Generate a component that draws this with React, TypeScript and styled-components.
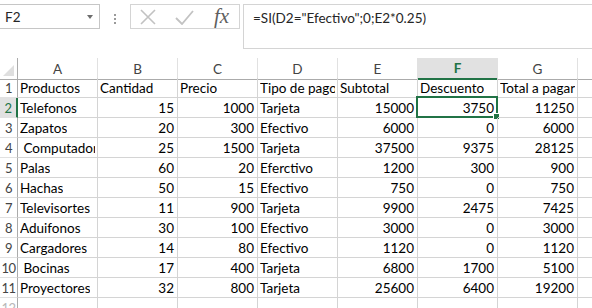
import React from 'react'
import styled, { createGlobalStyle } from 'styled-components'

const GlobalStyle = createGlobalStyle`
  html, body {
    margin: 0;
    padding: 0;
    background: #ffffff;
    overflow: hidden;
  }
  body {
    font-family: 'Lato', 'Liberation Sans', sans-serif;
  }
`

const Page = styled.div`
  width: 592px;
  height: 308px;
  overflow: hidden;
  background: #ffffff;
`

const FormulaBar = styled.div`
  display: flex;
  align-items: flex-start;
  height: 58px;
`

const NameBox = styled.div`
  margin: 4px 0 0 -1px;
  width: 101px;
  height: 25px;
  box-sizing: border-box;
  border: 1px solid #c6c6c6;
  display: flex;
  align-items: center;
  justify-content: space-between;
  padding: 0 6px 0 5px;
  font-size: 13.5px;
  color: #262626;
`

const DropArrow = styled.span`
  width: 0;
  height: 0;
  border-left: 3px solid transparent;
  border-right: 3px solid transparent;
  border-top: 4px solid #6d6d6d;
`

const Grip = styled.div`
  width: 30px;
  height: 29px;
  display: flex;
  flex-direction: column;
  align-items: center;
  justify-content: center;
  gap: 2px;
  margin-top: 4px;

  span {
    width: 2px;
    height: 2px;
    background: #9a9a9a;
  }
`

const ButtonBox = styled.div`
  margin-top: 4px;
  width: 110px;
  height: 25px;
  box-sizing: border-box;
  border: 1px solid #d4d4d4;
  display: flex;
  align-items: center;
  padding: 0 8px;
  gap: 18px;
`

const Fx = styled.span`
  font-family: 'Liberation Serif', serif;
  font-style: italic;
  font-size: 21px;
  color: #5f5f5f;
  line-height: 1;
  margin-left: 2px;
`

const FormulaInput = styled.div`
  margin: 4px 0 0 3px;
  flex: 1;
  height: 45px;
  box-sizing: border-box;
  border: 1px solid #d4d4d4;
  border-right: none;
  padding: 5px 0 0 9px;
  font-size: 13.5px;
  color: #262626;
`

const Sheet = styled.div`
  display: grid;
  grid-template-columns: 18px repeat(8, 80px);
  grid-auto-rows: 20px;
  width: 658px;
  font-size: 13.5px;
  color: #000000;
`

const Corner = styled.div`
  height: 22px;
  border-bottom: 1px solid #ababab;
  border-right: 1px solid #ababab;
  box-sizing: border-box;
  position: relative;

  &::after {
    content: '';
    position: absolute;
    right: 3px;
    bottom: 3px;
    width: 0;
    height: 0;
    border-left: 11px solid transparent;
    border-bottom: 11px solid #dfdfdf;
  }
`

const ColHead = styled.div<{ $active?: boolean }>`
  height: 22px;
  box-sizing: border-box;
  display: flex;
  align-items: center;
  justify-content: center;
  font-size: 13.5px;
  color: ${(p) => (p.$active ? '#217346' : '#444444')};
  font-weight: ${(p) => (p.$active ? 700 : 400)};
  background: ${(p) => (p.$active ? '#e1e1e1' : '#ffffff')};
  border-bottom: ${(p) => (p.$active ? '2px solid #217346' : '1px solid #ababab')};
  border-right: 1px solid #e1e1e1;
`

const RowHead = styled.div<{ $active?: boolean; $faded?: boolean }>`
  box-sizing: border-box;
  display: flex;
  align-items: center;
  justify-content: center;
  padding-top: 1px;
  font-size: 13px;
  color: ${(p) => (p.$active ? '#217346' : p.$faded ? '#b8b8b8' : '#444444')};
  background: ${(p) => (p.$active ? '#e1e1e1' : '#ffffff')};
  border-right: ${(p) => (p.$active ? '2px solid #217346' : '1px solid #ababab')};
  border-bottom: 1px solid #e1e1e1;
  letter-spacing: -0.5px;
  overflow: hidden;
`

const Cell = styled.div<{ $num?: boolean }>`
  position: relative;
  box-sizing: border-box;
  border-right: 1px solid #d4d4d4;
  border-bottom: 1px solid #d4d4d4;
  padding: 1px ${(p) => (p.$num ? '3px' : '2px')} 0;
  display: flex;
  align-items: center;
  justify-content: ${(p) => (p.$num ? 'flex-end' : 'flex-start')};
  white-space: pre;
  overflow: visible;
`

const Clip = styled.span`
  display: block;
  overflow: hidden;
  white-space: pre;
`

const Selection = styled.div`
  position: absolute;
  left: -2px;
  top: -2px;
  right: -1px;
  bottom: -1px;
  border: 2px solid #217346;
  pointer-events: none;

  &::after {
    content: '';
    position: absolute;
    right: -4px;
    bottom: -4px;
    width: 5px;
    height: 5px;
    background: #217346;
    border: 1px solid #ffffff;
  }
`

const QuickAnalysis = styled.div`
  position: absolute;
  left: 3px;
  bottom: -6px;
  width: 12px;
  height: 12px;
  box-sizing: border-box;
  border: 1px solid #9fb8d8;
  background: #f3f7fc;

  &::after {
    content: '';
    position: absolute;
    left: 2px;
    top: 3px;
    width: 6px;
    height: 5px;
    background: #3d7cc9;
  }
`

type Row = [string, number, number, string, number, number, number]

const rows: Row[] = [
  ['Telefonos', 15, 1000, 'Tarjeta', 15000, 3750, 11250],
  ['Zapatos', 20, 300, 'Efectivo', 6000, 0, 6000],
  [' Computadora', 25, 1500, 'Tarjeta', 37500, 9375, 28125],
  ['Palas', 60, 20, 'Eferctivo', 1200, 300, 900],
  ['Hachas', 50, 15, 'Efectivo', 750, 0, 750],
  ['Televisortes', 11, 900, 'Tarjeta', 9900, 2475, 7425],
  ['Aduifonos', 30, 100, 'Efectivo', 3000, 0, 3000],
  ['Cargadores', 14, 80, 'Efectivo', 1120, 0, 1120],
  [' Bocinas', 17, 400, 'Tarjeta', 6800, 1700, 5100],
  ['Proyectores', 32, 800, 'Tarjeta', 25600, 6400, 19200],
]

const headers = ['Productos', 'Cantidad', 'Precio', 'Tipo de pago', 'Subtotal', 'Descuento', 'Total a pagar']
const letters = ['A', 'B', 'C', 'D', 'E', 'F', 'G', 'H']

const CancelIcon = () => (
  <svg width="18" height="16" viewBox="0 0 18 16">
    <path d="M2 1 L16 15 M16 1 L2 15" stroke="#c2c2c2" strokeWidth="1.6" fill="none" />
  </svg>
)

const EnterIcon = () => (
  <svg width="19" height="16" viewBox="0 0 19 16">
    <path d="M1 9 L7 15 L18 2" stroke="#c2c2c2" strokeWidth="1.8" fill="none" />
  </svg>
)

const App = () => {
  return (
    <Page>
      <GlobalStyle />
      <FormulaBar>
        <NameBox>
          F2
          <DropArrow />
        </NameBox>
        <Grip>
          <span />
          <span />
          <span />
        </Grip>
        <ButtonBox>
          <CancelIcon />
          <EnterIcon />
          <Fx>fx</Fx>
        </ButtonBox>
        <FormulaInput>=SI(D2="Efectivo";0;E2*0.25)</FormulaInput>
      </FormulaBar>
      <Sheet>
        <Corner />
        {letters.map((l) => (
          <ColHead key={l} $active={l === 'F'}>
            {l}
          </ColHead>
        ))}

        <RowHead>1</RowHead>
        {headers.map((h) => (
          <Cell key={h}>
            <Clip>{h}</Clip>
          </Cell>
        ))}
        <Cell />

        {rows.map((r, i) => (
          <React.Fragment key={i}>
            <RowHead $active={i === 0}>{i + 2}</RowHead>
            <Cell>
              <Clip>{r[0]}</Clip>
            </Cell>
            <Cell $num>{r[1]}</Cell>
            <Cell $num>{r[2]}</Cell>
            <Cell>{r[3]}</Cell>
            <Cell $num>{r[4]}</Cell>
            <Cell $num>
              {r[5]}
              {i === 0 && <Selection />}
            </Cell>
            <Cell $num>{r[6]}</Cell>
            <Cell />
          </React.Fragment>
        ))}

        <RowHead $faded>12</RowHead>
        <Cell />
        <Cell />
        <Cell />
        <Cell />
        <Cell />
        <Cell />
        <Cell />
        <Cell>
          <QuickAnalysis />
        </Cell>
      </Sheet>
    </Page>
  )
}

export default App
